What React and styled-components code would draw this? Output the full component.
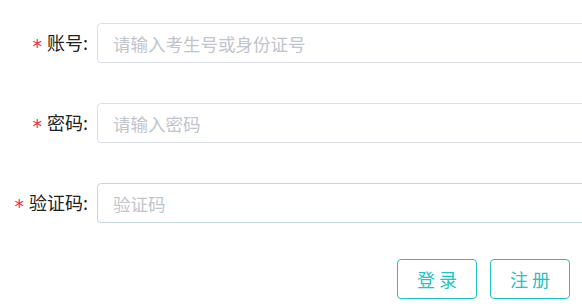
import React from "react";
import styled, { createGlobalStyle } from "styled-components";

const Global = createGlobalStyle`
  html, body { margin: 0; padding: 0; background: #fff; overflow: hidden; }
  body { font-family: "Microsoft YaHei", "Noto Sans CJK SC", "Noto Sans", sans-serif; }
`;

const Form = styled.form`
  width: 582px;
  padding-top: 23px;
  display: flex;
  flex-direction: column;
  gap: 40px;
`;

const Row = styled.div`
  display: flex;
  align-items: center;
  height: 40px;
`;

const Label = styled.label`
  flex: 0 0 97px;
  box-sizing: border-box;
  padding-right: 9px;
  text-align: right;
  font-size: 18px;
  color: #222;
  white-space: nowrap;
`;

const Star = styled.span`
  color: #f5284e;
  margin-right: 5px;
  font-size: 19px;
  font-family: "DejaVu Sans", sans-serif;
  vertical-align: -3px;
`;

const Input = styled.input`
  flex: 0 0 520px;
  height: 40px;
  box-sizing: border-box;
  border: 1px solid ${(p) => (p.$active ? "#c3d8d8" : "#dcdfe6")};
  border-radius: 4px;
  padding: 0 15px;
  font-size: 17.5px;
  font-family: inherit;
  color: #606266;
  outline: none;
  &::placeholder { color: #c0c4cc; }
`;

const Actions = styled.div`
  display: flex;
  justify-content: flex-end;
  gap: 13px;
  padding-right: 12px;
  margin-top: -4px;
`;

const Button = styled.button`
  width: 80px;
  height: 40px;
  box-sizing: border-box;
  border: 1px solid #1ec2c9;
  border-radius: 4px;
  background: #fff;
  color: #1ec2c9;
  font-family: inherit;
  font-size: 18px;
  letter-spacing: 4px;
  text-indent: 4px;
  padding: 0;
  cursor: pointer;
`;

export default function App() {
  return (
    <>
      <Global />
      <Form onSubmit={(e) => e.preventDefault()}>
        <Row>
          <Label><Star>*</Star>账号:</Label>
          <Input placeholder="请输入考生号或身份证号" />
        </Row>
        <Row>
          <Label><Star>*</Star>密码:</Label>
          <Input type="password" placeholder="请输入密码" />
        </Row>
        <Row>
          <Label><Star>*</Star>验证码:</Label>
          <Input $active placeholder="验证码" />
        </Row>
        <Actions>
          <Button type="button">登录</Button>
          <Button type="button">注册</Button>
        </Actions>
      </Form>
    </>
  );
}
